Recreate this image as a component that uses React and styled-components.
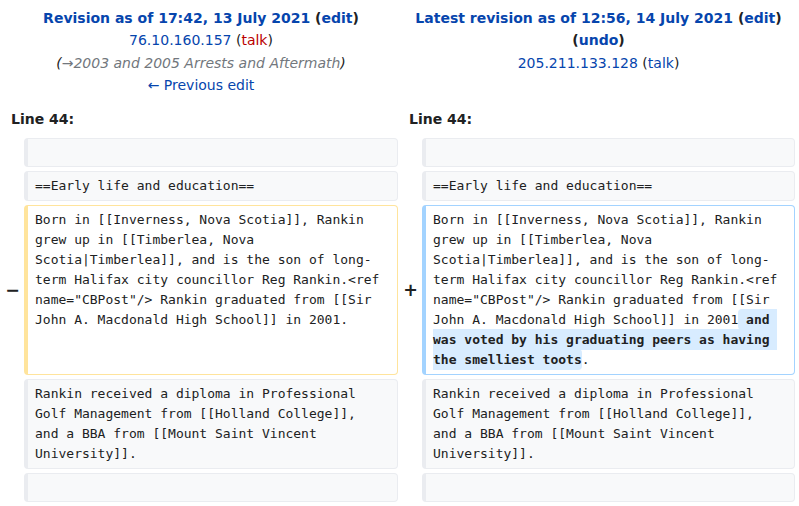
import React from "react";
import styled, { createGlobalStyle, css } from "styled-components";

const Global = createGlobalStyle`
  html, body { margin: 0; padding: 0; background: #fff; }
  body {
    font-family: "DejaVu Sans", "Liberation Sans", sans-serif;
    font-size: 14px;
    line-height: 1.6;
    color: #202122;
  }
`;

const DiffTable = styled.table`
  width: 799px;
  table-layout: fixed;
  border-spacing: 4px;
  border-collapse: separate;
`;

const TitleCell = styled.td`
  text-align: center;
  vertical-align: top;
  padding: 3px 0;
  line-height: 22.4px;
`;

const TitleLine = styled.div``;

const Link = styled.a`
  color: ${(p) => (p.$red ? "#ba0000" : "#0645ad")};
  text-decoration: none;
  font-weight: ${(p) => (p.$bold ? "bold" : "normal")};
`;

const Strong = styled.strong`
  font-weight: bold;
`;

const Comment = styled.span`
  font-style: italic;
  color: #202122;
`;

const CommentText = styled.span`
  color: #72777d;
`;

const LineNo = styled.td`
  font-weight: bold;
  padding: 4px 7px 4px 7px;
  line-height: 22.4px;
`;

const Marker = styled.td`
  text-align: right;
  vertical-align: middle;
  font-weight: bold;
  font-size: 17.5px;
  line-height: 1.2;
  padding: 0;
  color: #202122;
`;

const variants = {
  context: css`
    background: #f8f9fa;
    border-color: #eaecf0;
  `,
  deleted: css`
    background: #ffffff;
    border-color: #ffe49c;
  `,
  added: css`
    background: #ffffff;
    border-color: #a3d3ff;
  `,
};

const Content = styled.td`
  font-family: "DejaVu Sans Mono", "Liberation Mono", monospace;
  font-size: 13px;
  line-height: 20px;
  vertical-align: top;
  padding: ${(p) => (p.$empty ? "4px 10px 3px 7px" : "4px 10px 4px 7px")};
  border-style: solid;
  border-width: 1px 1px 1px 4px;
  border-radius: 4px;
  white-space: pre-wrap;
  overflow-wrap: break-word;
  color: #202122;
  ${(p) => variants[p.$kind]}
`;

const Ins = styled.ins`
  text-decoration: none;
  font-weight: bold;
  background: #d8ecff;
  border-radius: 4px;
  padding: 3px 0;
`;

const bornText =
  'Born in [[Inverness, Nova Scotia]], Rankin grew up in [[Timberlea, Nova Scotia|Timberlea]], and is the son of long-term Halifax city councillor Reg Rankin.<ref name="CBPost"/> Rankin graduated from [[Sir John A. Macdonald High School]] in 2001';

const rankinText =
  "Rankin received a diploma in Professional Golf Management from [[Holland College]], and a BBA from [[Mount Saint Vincent University]].";

function ContextRow({ text }) {
  return (
    <tr>
      <Marker />
      <Content $kind="context" $empty={!text}>
        {text || <br />}
      </Content>
      <Marker />
      <Content $kind="context" $empty={!text}>
        {text || <br />}
      </Content>
    </tr>
  );
}

export default function App() {
  return (
    <>
      <Global />
      <DiffTable>
        <colgroup>
          <col style={{ width: 16 }} />
          <col style={{ width: 374 }} />
          <col style={{ width: 16 }} />
          <col style={{ width: 373 }} />
        </colgroup>
        <tbody>
          <tr>
            <TitleCell colSpan={2}>
              <TitleLine>
                <Strong>
                  <Link href="#" $bold>
                    Revision as of 17:42, 13 July 2021
                  </Link>{" "}
                  (<Link href="#" $bold>edit</Link>)
                </Strong>
              </TitleLine>
              <TitleLine>
                <Link href="#">76.10.160.157</Link> (
                <Link href="#" $red>
                  talk
                </Link>
                )
              </TitleLine>
              <TitleLine>
                <Comment>
                  (<CommentText>→2003 and 2005 Arrests and Aftermath</CommentText>)
                </Comment>
              </TitleLine>
              <TitleLine>
                <Link href="#">← Previous edit</Link>
              </TitleLine>
            </TitleCell>
            <TitleCell colSpan={2}>
              <TitleLine>
                <Strong>
                  <Link href="#" $bold>
                    Latest revision as of 12:56, 14 July 2021
                  </Link>{" "}
                  (<Link href="#" $bold>edit</Link>) (
                  <Link href="#" $bold>undo</Link>)
                </Strong>
              </TitleLine>
              <TitleLine>
                <Link href="#">205.211.133.128</Link> (
                <Link href="#">talk</Link>)
              </TitleLine>
            </TitleCell>
          </tr>
          <tr>
            <LineNo colSpan={2}>Line 44:</LineNo>
            <LineNo colSpan={2}>Line 44:</LineNo>
          </tr>
          <ContextRow text="" />
          <ContextRow text="==Early life and education==" />
          <tr>
            <Marker>−</Marker>
            <Content $kind="deleted">{bornText}.</Content>
            <Marker>+</Marker>
            <Content $kind="added">
              {bornText}
              <Ins> and was voted by his graduating peers as having the smelliest toots</Ins>.
            </Content>
          </tr>
          <ContextRow text={rankinText} />
          <ContextRow text="" />
        </tbody>
      </DiffTable>
    </>
  );
}
